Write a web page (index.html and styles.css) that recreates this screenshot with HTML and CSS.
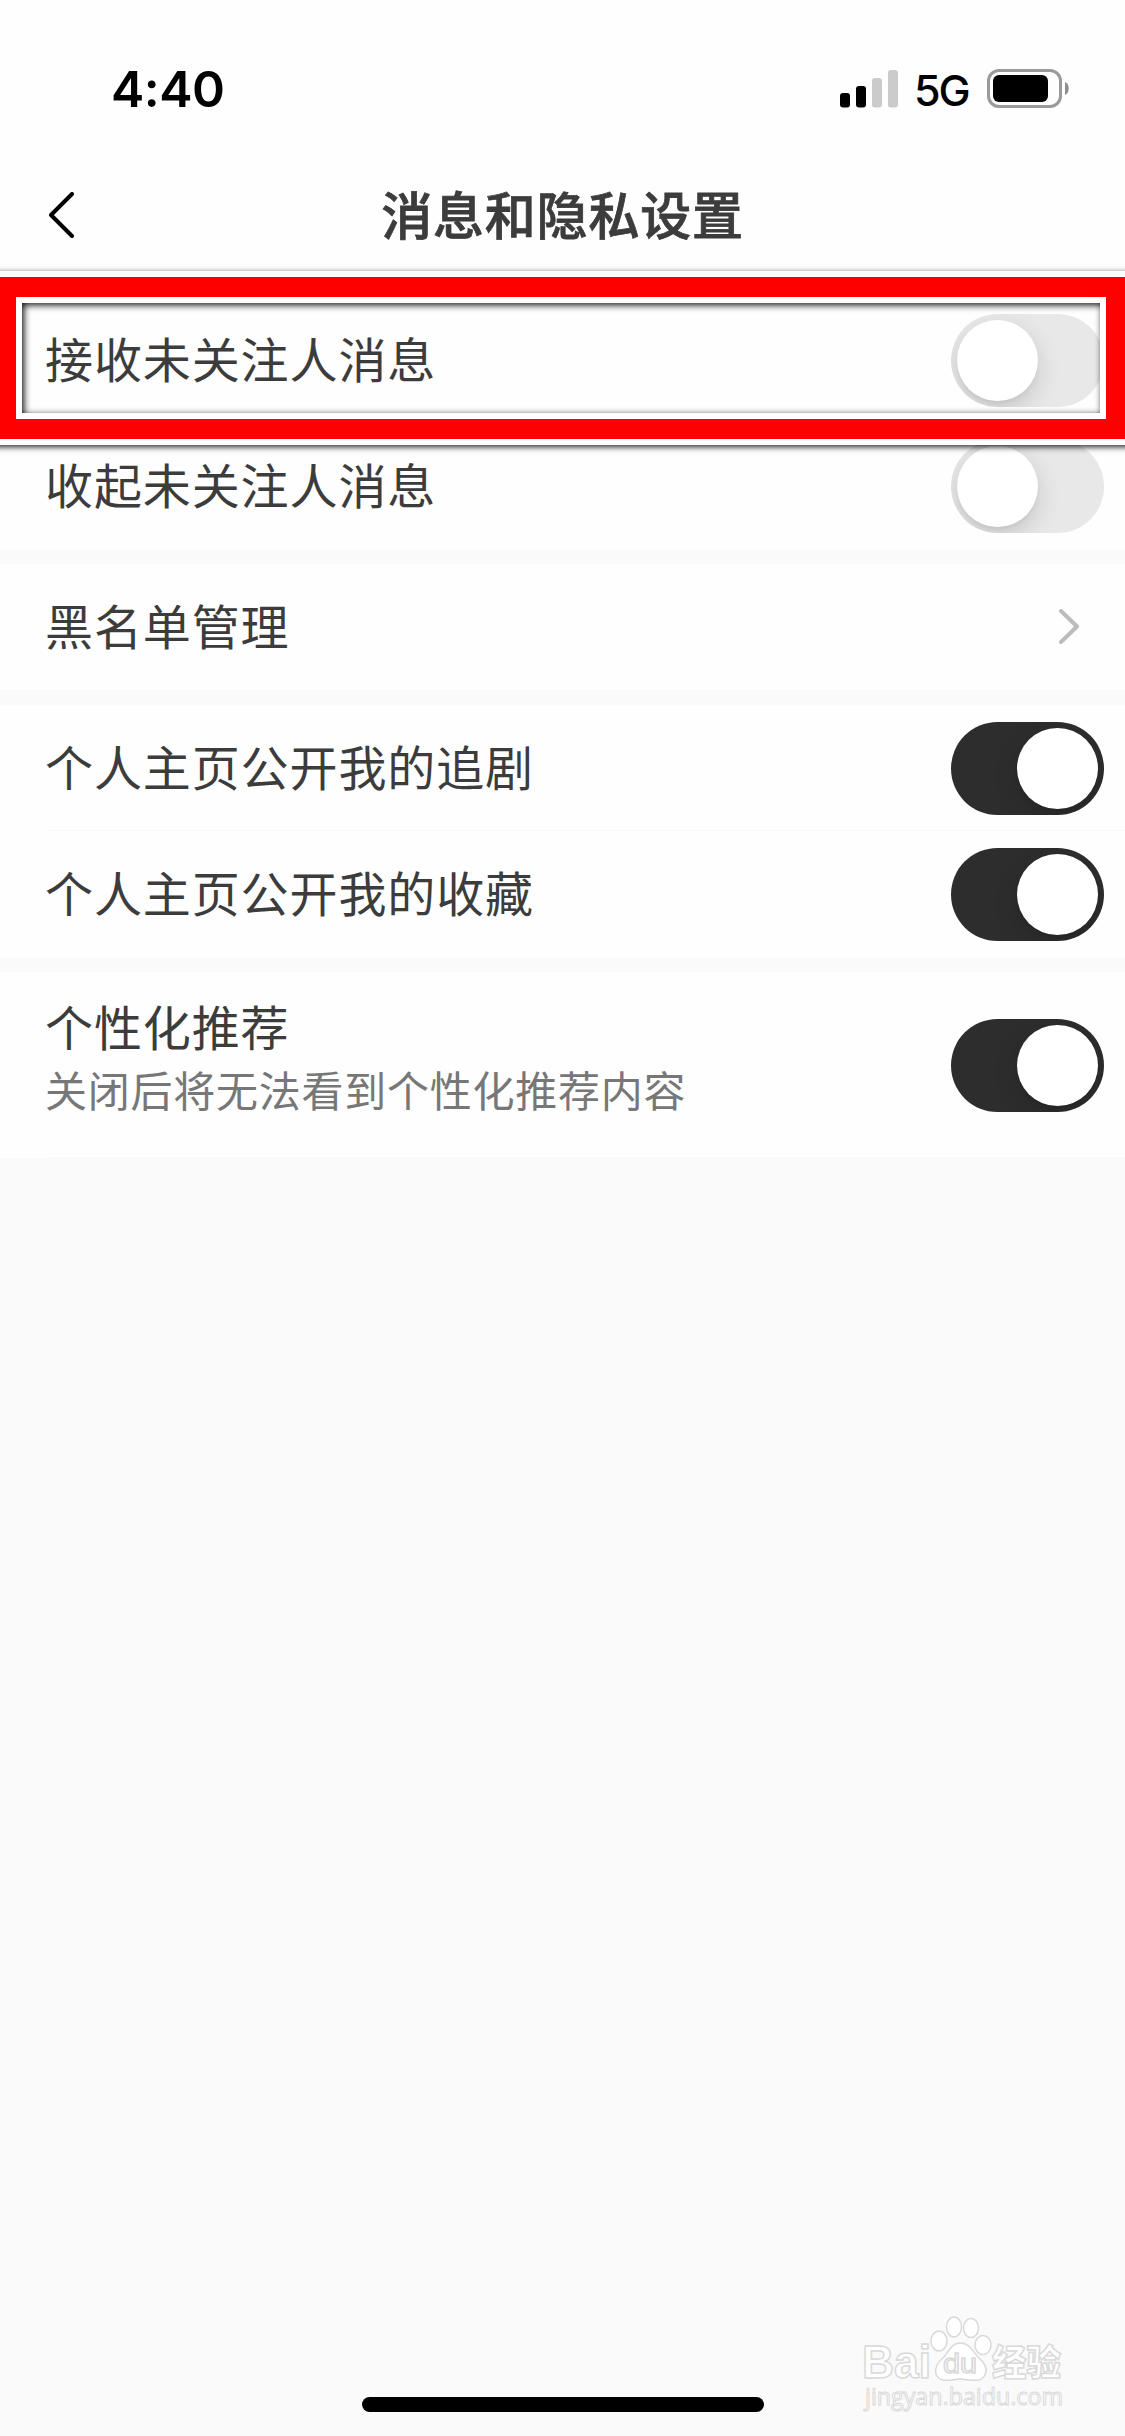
FILE: index.html
```html
<!DOCTYPE html>
<html lang="zh-CN">
<head>
<meta charset="utf-8">
<title>消息和隐私设置</title>
<link rel="stylesheet" href="styles.css">
</head>
<body>
<div class="screen">
  <div class="status-bar">
    <span class="time">4:40</span>
    <div class="status-icons">
      <svg class="signal" width="58" height="38" viewBox="0 0 58 38">
        <rect x="0" y="23" width="10" height="14.5" rx="3"/>
        <rect x="16" y="16" width="10" height="21.500" rx="3"/>
        <rect x="32" y="8" width="10" height="29.500" rx="3" fill="#cbcbcb"/>
        <rect x="48" y="0" width="10" height="37.500" rx="3" fill="#cbcbcb"/>
      </svg>
      <span class="network">5G</span>
      <svg class="battery" width="83" height="39" viewBox="0 0 83 39">
        <rect x="1.500" y="1.500" width="72" height="36" rx="10.500" fill="none" stroke="#9a9a9a" stroke-width="3"/>
        <rect x="6" y="6" width="55" height="27" rx="6"/>
        <path d="M78 13C83 15 83 24 78 26Z" fill="#8f8f8f"/>
      </svg>
    </div>
  </div>
  <header class="nav">
    <svg class="back" width="26" height="46" viewBox="0 0 26 46"><path d="M23 2L2 23L23 44"/></svg>
    <h1 class="title">消息和隐私设置</h1>
  </header>
  <main class="groups">
    <section class="group">
      <div class="row"><span class="label">接收未关注人消息</span><span class="toggle"><i class="knob"></i></span></div>
      <div class="row"><span class="label">收起未关注人消息</span><span class="toggle"><i class="knob"></i></span></div>
    </section>
    <section class="group">
      <div class="row"><span class="label">黑名单管理</span>
        <svg class="chevron" width="20" height="36" viewBox="0 0 20 36"><path d="M2 2L18 17.500L2 33"/></svg>
      </div>
    </section>
    <section class="group">
      <div class="row divided"><span class="label">个人主页公开我的追剧</span><span class="toggle on"><i class="knob"></i></span></div>
      <div class="row"><span class="label">个人主页公开我的收藏</span><span class="toggle on"><i class="knob"></i></span></div>
    </section>
    <section class="group">
      <div class="row tall divided">
        <div class="texts"><span class="label">个性化推荐</span><span class="hint">关闭后将无法看到个性化推荐内容</span></div>
        <span class="toggle on"><i class="knob"></i></span>
      </div>
    </section>
  </main>
  <div class="home-indicator"></div>
  <div class="highlight"><div class="highlight-red"><div class="highlight-inner"></div></div></div>
  <svg class="watermark" width="220" height="110" viewBox="0 0 220 110">
    <g class="mark">
      <text class="wm-brand" x="2" y="72" textLength="69" lengthAdjust="spacingAndGlyphs">Bai</text>
      <ellipse cx="79" cy="35" rx="8" ry="10"/>
      <ellipse cx="94" cy="21" rx="7.500" ry="10"/>
      <ellipse cx="111" cy="22" rx="7.500" ry="9.500"/>
      <ellipse cx="123" cy="39" rx="8" ry="9.500"/>
      <path d="M100 37C110 37 113 46 118 51C125 57 128 63 125 69C121 77 112 74 100 73C88 74 80 77 76 68C74 61 78 56 84 51C89 46 91 37 100 37Z"/>
      <text class="wm-du" x="83" y="67" textLength="34" lengthAdjust="spacingAndGlyphs">du</text>
      <text class="wm-cn" x="132" y="70" textLength="69" lengthAdjust="spacingAndGlyphs">经验</text>
      <text class="wm-url" x="5" y="99" textLength="198" lengthAdjust="spacingAndGlyphs">jingyan.baidu.com</text>
    </g>
  </svg>
</div>
</body>
</html>
```
FILE: styles.css
```css
* { box-sizing: border-box; }
body {
  margin: 0;
  background: #fafafa;
  font-family: "Noto Sans CJK SC", sans-serif;
  color: #3c3c3c;
}
.screen {
  position: relative;
  display: flex;
  flex-direction: column;
  width: 1125px;
  height: 2436px;
  overflow: hidden;
  background: #fafafa;
}
.status-bar {
  display: flex;
  justify-content: space-between;
  align-items: center;
  height: 147px;
  padding: 30px 55px 0 111px;
  background: #fefefe;
  color: #000;
  font-family: Inter, sans-serif;
}
.time {
  font-size: 50px;
  font-weight: 600;
  line-height: 60px;
  letter-spacing: -0.5px;
}
.status-icons { display: flex; align-items: center; }
.network {
  width: 56px;
  margin: 3px 17px 0 16px;
  font-size: 43px;
  font-weight: 500;
  line-height: 50px;
  letter-spacing: -2px;
}
.nav {
  display: grid;
  grid-template-columns: 74px 1fr 74px;
  align-items: center;
  height: 135px;
  padding: 0 49px;
  background: #fefefe;
}
.back { fill: none; stroke: #000; stroke-width: 4; stroke-linecap: round; stroke-linejoin: round; }
.title {
  margin: 0 0 4px;
  text-align: center;
  font-size: 51px;
  font-weight: 500;
  line-height: 74px;
  letter-spacing: 0.8px;
  -webkit-text-stroke: 0.8px #3c3c3c;
}
.groups {
  display: flex;
  flex-direction: column;
  gap: 15px;
  padding-top: 15px;
}
.group { background: #fefefe; }
.row {
  position: relative;
  display: flex;
  align-items: center;
  justify-content: space-between;
  height: 126px;
  padding: 1px 21px 0 45px;
}
.row.divided::after {
  content: "";
  position: absolute;
  left: 48px;
  right: 0;
  bottom: 0;
  height: 1px;
  background: #f9f9f9;
}
.row.tall { height: 186px; }
.label {
  padding-bottom: 8px;
  font-size: 48px;
  font-weight: 400;
  line-height: 70px;
  letter-spacing: 0.9px;
}
.texts { display: flex; flex-direction: column; }
.texts .label { padding-bottom: 0; }
.hint {
  margin-bottom: 24px;
  color: #777;
  font-size: 42px;
  line-height: 58px;
  letter-spacing: 0.75px;
}
.toggle {
  display: flex;
  width: 153px;
  height: 93px;
  padding: 6px;
  border-radius: 47px;
  overflow: hidden;
  background: #e8e8e8;
}
.toggle.on { justify-content: flex-end; background: #2d2d2d; }
.knob {
  width: 81px;
  height: 81px;
  border-radius: 50%;
  background: #fff;
  box-shadow: 0 9px 24px rgba(0, 0, 0, 0.15), 0 3px 3px rgba(0, 0, 0, 0.04);
}
.chevron {
  margin: 0 25px 2px 0;
  fill: none;
  stroke: #bcbcbc;
  stroke-width: 4;
  stroke-linecap: round;
  stroke-linejoin: round;
}
.home-indicator {
  width: 402px;
  height: 15px;
  margin: auto auto 24px 362px;
  border-radius: 8px;
  background: #000;
}
.highlight {
  position: absolute;
  left: -10px;
  top: 271px;
  width: 1142px;
  height: 174px;
  border: 6px solid #fff;
  box-shadow: 2px 2px 6px rgba(0, 0, 0, 0.85);
}
.highlight-red { height: 100%; border: 20px solid #f00; }
.highlight-inner {
  height: 100%;
  border: 6px solid #fff;
  box-shadow: inset 2px 2px 7px rgba(0, 0, 0, 0.95);
}
.watermark { position: absolute; left: 860px; top: 2306px; }
.mark { fill: #fff; stroke: #d9d9d9; stroke-width: 1.5; }
.wm-brand { font: 700 46px "Liberation Sans", sans-serif; }
.wm-du { font: 400 27px "Liberation Sans", sans-serif; }
.wm-cn { font: 900 36px "Noto Sans CJK SC", sans-serif; }
.wm-url { font: 400 24px "Open Sans", sans-serif; stroke-width: 1; }
```
